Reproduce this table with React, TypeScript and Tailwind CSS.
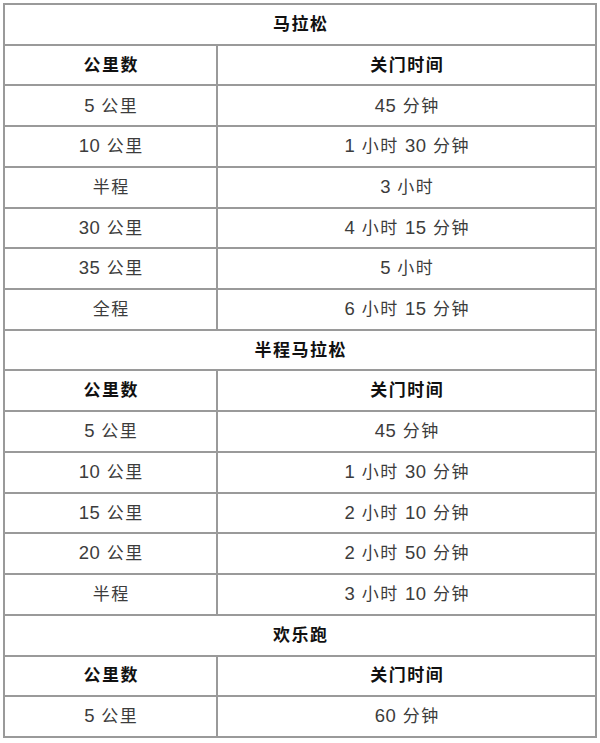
import React from "react";

type Row = { kind: "title"; text: string } | { kind: "head" } | { kind: "data"; a: string; b: string };

const rows: Row[] = [
  { kind: "title", text: "马拉松" },
  { kind: "head" },
  { kind: "data", a: "5 公里", b: "45 分钟" },
  { kind: "data", a: "10 公里", b: "1 小时 30 分钟" },
  { kind: "data", a: "半程", b: "3 小时" },
  { kind: "data", a: "30 公里", b: "4 小时 15 分钟" },
  { kind: "data", a: "35 公里", b: "5 小时" },
  { kind: "data", a: "全程", b: "6 小时 15 分钟" },
  { kind: "title", text: "半程马拉松" },
  { kind: "head" },
  { kind: "data", a: "5 公里", b: "45 分钟" },
  { kind: "data", a: "10 公里", b: "1 小时 30 分钟" },
  { kind: "data", a: "15 公里", b: "2 小时 10 分钟" },
  { kind: "data", a: "20 公里", b: "2 小时 50 分钟" },
  { kind: "data", a: "半程", b: "3 小时 10 分钟" },
  { kind: "title", text: "欢乐跑" },
  { kind: "head" },
  { kind: "data", a: "5 公里", b: "60 分钟" },
];

function DataText({ text }: { text: string }) {
  const parts = text.split(/(\d+)/).filter((p) => p.length > 0);
  return (
    <span className="text-[#3c3c3c] leading-none pl-[1.5px] whitespace-pre">
      {parts.map((p, i) =>
        /^\d+$/.test(p) ? (
          <span key={i} className="text-[18.5px] tracking-[0.6px]">
            {p}
          </span>
        ) : (
          <span key={i} className="text-[17px] tracking-[1.5px]">
            {p}
          </span>
        )
      )}
    </span>
  );
}

export default function App() {
  return (
    <div
      className="w-[600px] h-[743px] bg-white pt-[3px] pl-[3px]"
      style={{ fontFamily: '"Liberation Sans", "Noto Sans CJK SC", sans-serif' }}
    >
      <div className="w-[594px] border-2 border-[#9a9a9a] flex flex-col">
        {rows.map((r, i) => {
          const last = i === rows.length - 1;
          const rowCls =
            "flex items-center " +
            (last ? "h-[38.72px]" : "h-[40.72px] border-b-2 border-[#9a9a9a]");
          if (r.kind === "title") {
            return (
              <div key={i} className={rowCls + " justify-center"}>
                <span className="text-[17px] font-bold text-[#111] tracking-[1.5px] pl-[1.5px] leading-none">
                  {r.text}
                </span>
              </div>
            );
          }
          const headCls = "text-[17px] font-bold text-[#111] tracking-[1.5px] pl-[1.5px] leading-none";
          return (
            <div key={i} className={rowCls}>
              <div className="w-[213px] h-full flex items-center justify-center border-r-2 border-[#9a9a9a]">
                {r.kind === "head" ? <span className={headCls}>公里数</span> : <DataText text={r.a} />}
              </div>
              <div className="flex-1 h-full flex items-center justify-center">
                {r.kind === "head" ? <span className={headCls}>关门时间</span> : <DataText text={r.b} />}
              </div>
            </div>
          );
        })}
      </div>
    </div>
  );
}
